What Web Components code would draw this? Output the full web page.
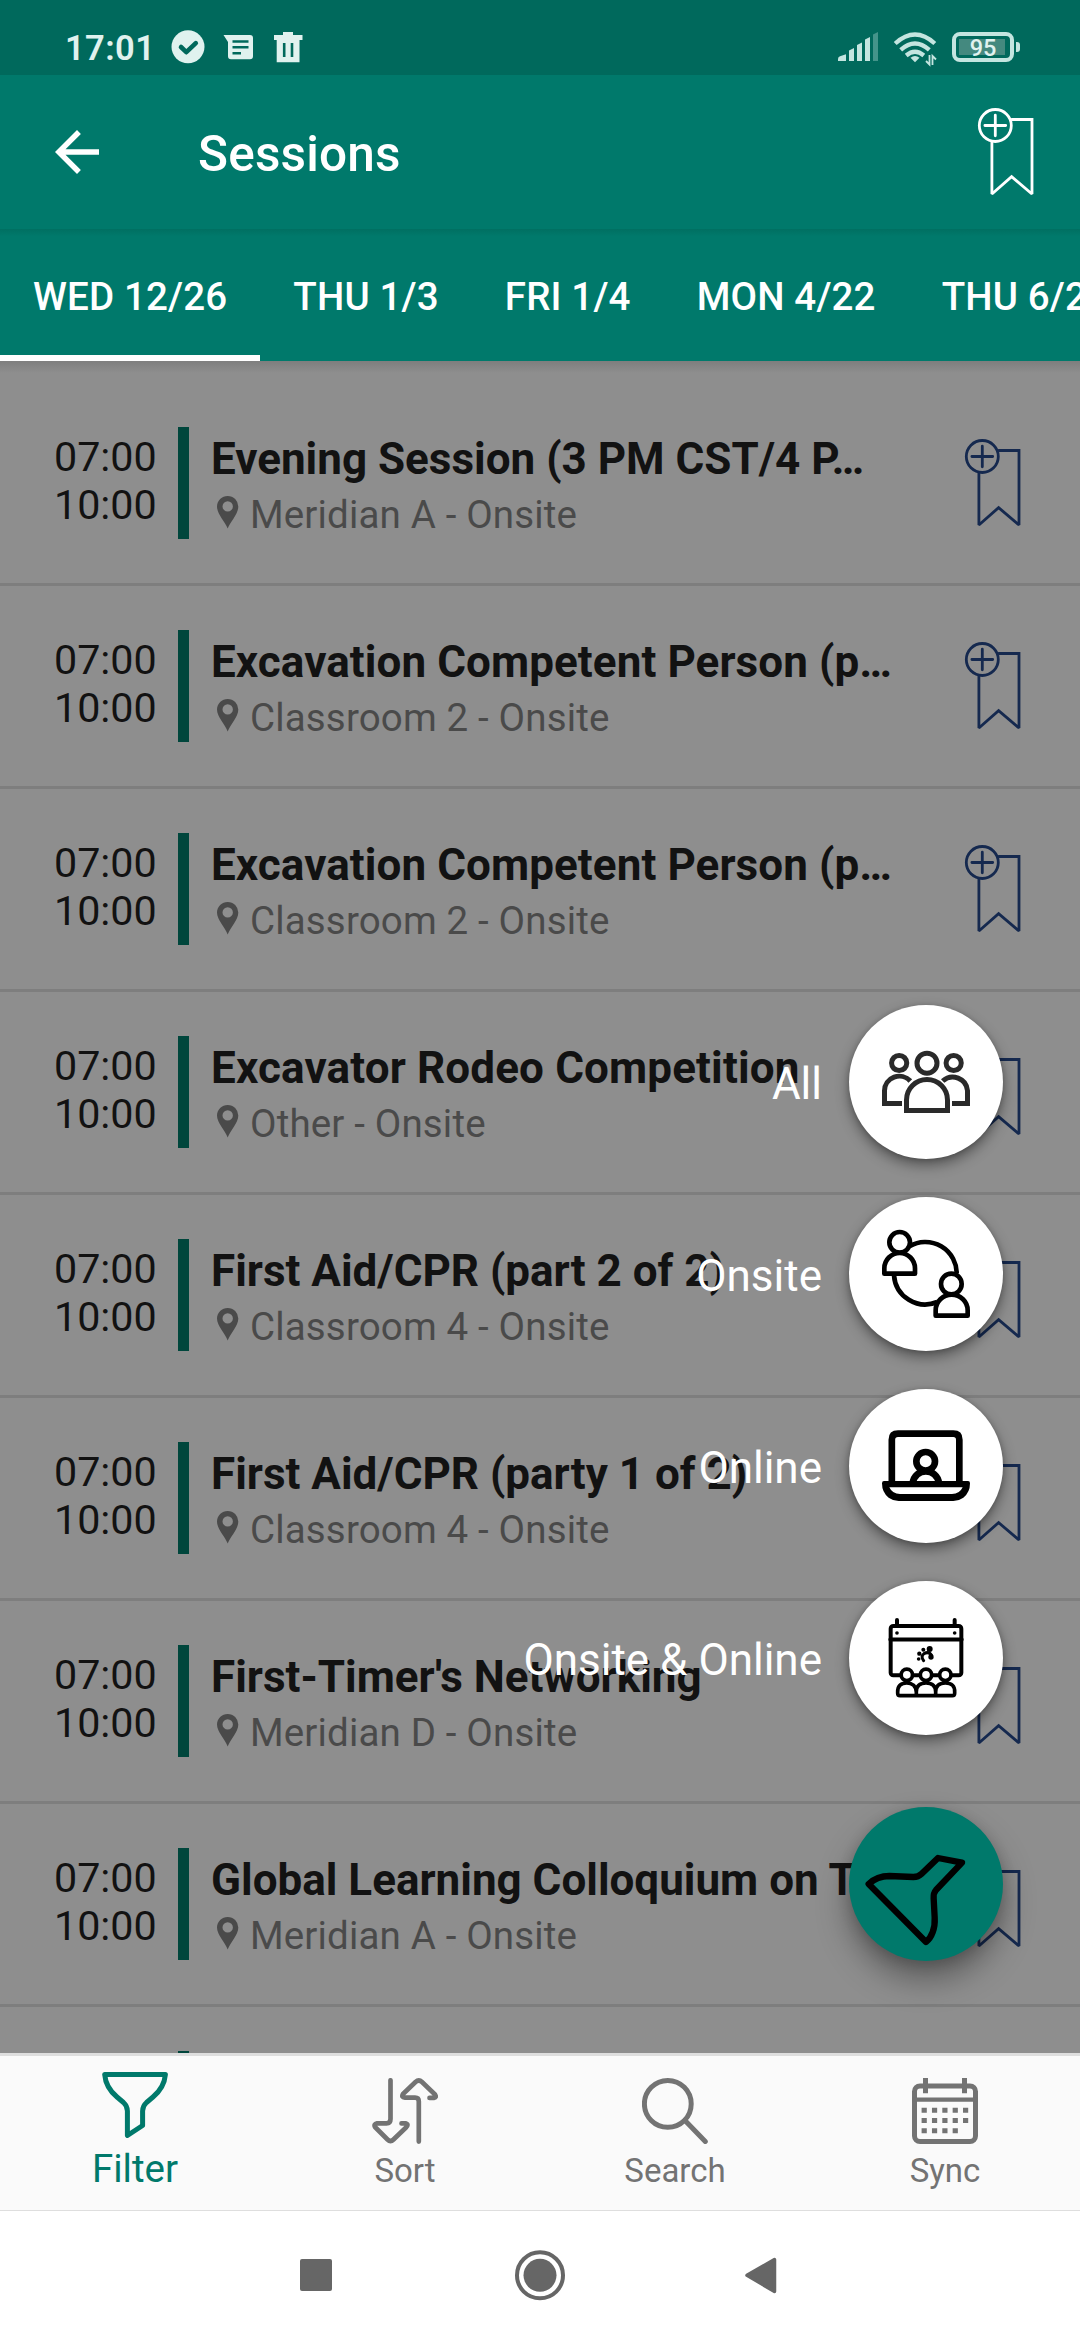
<!DOCTYPE html>
<html lang="en">
<head>
<meta charset="utf-8">
<title>Sessions</title>
<style>
html,body{margin:0;padding:0}
body{width:1080px;height:2340px;overflow:hidden;background:#fff;font-family:Roboto,"Noto Sans",sans-serif}
</style>
</head>
<body>
<sessions-screen></sessions-screen>
<script>
const define = (name, html, setup) => customElements.define(name, class extends HTMLElement {
  connectedCallback() {
    if (this.shadowRoot) return;
    const t = document.createElement('template');
    t.innerHTML = typeof html === 'function' ? html(this) : html;
    this.attachShadow({ mode: 'open' }).appendChild(t.content.cloneNode(true));
    if (setup) setup(this);
  }
});

/* Bookmark ribbon with a circled plus */
define('bookmark-icon', `
<style>:host{display:block;width:60px;height:90px}svg{display:block}</style>
<svg width="60" height="90" fill="none" stroke="currentColor" stroke-width="2.8" stroke-linejoin="round" stroke-linecap="round">
<circle cx="19.3" cy="18.5" r="16"/><path d="M8.9 18.5h20.8M19.3 8.2v20.6"/>
<path d="M36 12.5h20v74.500L35.6 69.6 15.9 87V35.5" stroke-linejoin="miter" stroke-miterlimit="2"/></svg>`);

define('status-bar', `
<style>
:host{display:flex;height:75px;background:#00695c;color:#e0f2ef;box-sizing:border-box;padding:0 60px 0 65px;align-items:flex-start}
.time{font-size:34.5px;font-weight:600;line-height:40px;margin-top:28px;width:106px;letter-spacing:.4px;white-space:nowrap}
svg{display:block}
.sp{flex:1}
.bat{margin-top:32px;display:flex;align-items:center;gap:2px}
.box{box-sizing:border-box;width:62px;height:30px;border:4px solid #c4e5e0;border-radius:8px;display:flex;align-items:center;justify-content:center;
background:linear-gradient(#44897f,#44897f) 3px 3px/46px 16px no-repeat;font-size:23.5px;font-weight:500;line-height:24px;padding-top:2px}
.cap{width:4px;height:10px;border-radius:0 3px 3px 0;background:#c4e5e0}
</style>
<div class="time">17:01</div>
<svg width="132" height="75" viewBox="171 0 132 75" fill="currentColor">
<circle cx="188" cy="46.8" r="16.5"/><path d="M181 47l5.3 5.2 9.5-9" fill="none" stroke="#00695c" stroke-width="4.6" stroke-linecap="round" stroke-linejoin="round"/>
<path d="M223.5 35H250q3 0 3 3v18.300q0 3-3 3h-19q-3 0-3-3V42z"/>
<path d="M232.500 41.500h16M232.500 47.300h16M232.500 53.200h8.500" stroke="#00695c" stroke-width="2.4"/>
<path d="M283 32h10v3h9.500v5H274v-5h9zM276.700 39H299.500V62.300H276.700z"/><path d="M284.200 43v14M292 43v14" stroke="#00695c" stroke-width="2.600"/>
</svg>
<div class="sp"></div>
<svg width="114" height="75" viewBox="838 0 114 75" fill="#c4e5e0">
<path d="M838 61v-2q0-2 2-2.800l6-2V61zM849 61V50.500l5-2.500V61zM857 61V45l5-2.500V61zM865 61V39.500l5-2.500V61z"/>
<path d="M873 61V34.500l5-2.500V61z" opacity=".35"/>
<g fill="none" stroke="#c4e5e0" stroke-width="4.300"><path d="M895.200 43.500Q915 25.500 934.800 43.500M900.700 49.800Q915 37 929.300 49.800M906.200 55.500Q915 48 923.800 55.500"/></g>
<path d="M915 62.300l-4.500-4.600q4.500-3.500 9 0z"/>
<path d="M929.500 55v9.500l-3.500-3.500M932.500 65v-9l3.500 3.500" fill="none" stroke="#c4e5e0" stroke-width="1.800"/>
</svg>
<div class="bat"><div class="box">95</div><div class="cap"></div></div>`);

define('app-bar', `
<style>
:host{display:flex;height:154px;background:#00796b;color:#fff;align-items:center;box-sizing:border-box;padding:0 44px}
svg{display:block;width:66px;height:66px}
h1{margin:4px 0 0 88px;font-size:49.5px;font-weight:500;line-height:60px;flex:1;letter-spacing:.2px}
</style>
<svg viewBox="0 0 24 24" fill="currentColor"><path d="M20 11H7.830l5.590-5.590L12 4l-8 8 8 8 1.410-1.410L7.830 13H20v-2z"/></svg>
<h1><slot></slot></h1><bookmark-icon></bookmark-icon>`);

define('day-tab', `
<style>
:host{display:block;flex:none;box-sizing:border-box;height:132px;padding:45px 33px 0;font-size:38.5px;font-weight:500;line-height:46px;letter-spacing:.16px;white-space:nowrap}
:host([selected]){border-bottom:6px solid #fff}
</style><slot></slot>`);

define('day-tabs', `
<style>:host{display:flex;height:132px;background:linear-gradient(#006f61,#00796b 7px);color:#fff;overflow:hidden}</style><slot></slot>`);

define('session-row', el => `
<style>
:host{display:flex;align-items:flex-start;box-sizing:border-box;height:203px;padding-left:54px;border-bottom:3px solid #7e7e7e;color:#121212}
.times{width:124px;margin-top:50px;font-size:41.25px;line-height:48px}
.bar{width:11px;height:112px;margin-top:44px;background:#00463c}
.body{margin:50px 0 0 22px;width:752px;white-space:nowrap}
.title{font-size:44px;font-weight:700;line-height:52px;letter-spacing:${el.getAttribute('tracking') || 0}px}
.place{display:flex;align-items:flex-start;margin-top:7px;font-size:38.500px;line-height:46px;letter-spacing:.16px;color:#4a4a4a}
svg{display:block;margin:4px 11px 0 6px}
bookmark-icon{margin-top:55px;color:#15294f}
</style>
<div class="times"><div>07:00</div><div>10:00</div></div>
<div class="bar"></div>
<div class="body"><div class="title"><slot></slot></div>
<div class="place"><svg width="22" height="33" fill="currentColor" fill-rule="evenodd"><path d="M10.700 0A10.600 10.600 0 0 1 21.300 10.600C21.300 18 13.500 25.500 10.700 32.500 8 25.500 0 18 0 10.600A10.700 10.600 0 0 1 10.700 0zm0 5.200a5.200 5.200 0 1 0 0 10.400 5.200 5.200 0 0 0 0-10.400z"/></svg><span>${el.getAttribute('place') || ''}</span></div></div>
<bookmark-icon></bookmark-icon>`);

define('session-list', `
<style>:host{display:block;height:1692px;box-sizing:border-box;padding-top:22px;overflow:hidden;background:linear-gradient(#7e7e7e,#8e8e8e 12px)}</style><slot></slot>`);

const ICONS = {
all: ['327 75 462 462', `<g fill="none" stroke="#2a2a2a" stroke-width="15"><circle cx="477.500" cy="249" r="22.800"/><circle cx="641" cy="249" r="22.800"/><circle cx="561" cy="249.500" r="30"/>
<path d="M511 303A44.500 44 0 0 0 433.500 332V370.500H486M608 303A44.500 44 0 0 1 682.500 332V370.500H636"/><path d="M499.500 391.500V360A61.500 61.500 0 0 1 622.500 360V391.500Z"/></g>`],
onsite: ['327 651 462 462', `<g fill="none" stroke="#000" stroke-width="14" stroke-linejoin="round"><path d="M510 798A94 94 0 0 1 650 880M462 886A94 94 0 0 0 592 966"/>
<circle cx="479" cy="787" r="31"/><path d="M433 881V865A46 46 0 0 1 525 865V881Z"/>
<circle cx="634" cy="912" r="31"/><path d="M587 1007V991A48 47 0 0 1 683 991V1007Z"/></g>`],
online: ['327 57 462 462', `<g fill="none" stroke="#000" stroke-width="20"><path d="M455.500 338V209Q455.500 191 474 191H640Q658 191 658 209V338"/><circle cx="557" cy="274" r="28"/><path d="M518 340C524 292 591 292 597 340"/></g>
<path fill-rule="evenodd" d="M432 333H684Q690 333 690 340 690 368 670 383 656 393 640 393H476Q460 393 446 383 426 368 426 340 426 333 432 333ZM448 352Q457 372 480 372H636Q659 372 668 352Z"/>`],
both: ['327 633 462 462', `<g fill="none" stroke="#000" stroke-width="12" stroke-linecap="round"><rect x="452" y="768" width="212" height="148" rx="8"/><path d="M451 808.500H665M471 750V766M644 750V766"/></g>
<circle cx="471" cy="789" r="5.500"/><circle cx="644" cy="789" r="5.500"/>
<path d="M551 872Q541 860 552 851 566 843 575 856" fill="none" stroke="#000" stroke-width="9" stroke-linecap="round"/><circle cx="573" cy="861" r="8"/><circle cx="569" cy="837" r="9"/><circle cx="550" cy="839" r="6"/><circle cx="538" cy="851" r="6.500"/><circle cx="536" cy="867" r="5.500"/>
<g fill="#fff" stroke="#000" stroke-width="11" stroke-linejoin="round"><path d="M473 966Q473 939 500 939T529 966V977H480Q473 977 473 970ZM529 966Q529 939 558 939T587 966V977H529ZM587 966Q587 939 616 939T644 966V970Q644 977 637 977H587Z"/>
<circle cx="500.500" cy="914.500" r="17"/><circle cx="558" cy="914.500" r="17"/><circle cx="616" cy="914.500" r="17"/></g>`],
funnel: ['327 80 462 462', `<path fill="none" stroke="#000" stroke-width="19" stroke-linejoin="round" d="M386 311C402 296 422 287 448 287L520 290Q535 290 545 280L594 233 666 247 588 329Q580 338 581 354L584 412C586 444 575 472 558 485Z"/>`]
};

define('dial-action', el => {
  const [vb, art] = ICONS[el.getAttribute('icon')];
  return `
<style>
:host{display:flex;align-items:center;justify-content:flex-end;height:154px}
.label{font-size:44px;line-height:52px;color:#fff;margin:4px 27px 0 0;white-space:nowrap}
.fab{width:154px;height:154px;border-radius:50%;background:#fff;box-shadow:0 6px 14px rgba(0,0,0,.42),0 1px 5px rgba(0,0,0,.18)}
:host([main]) .fab{background:#00796b;box-shadow:0 18px 32px rgba(0,0,0,.36),0 3px 14px rgba(0,0,0,.16)}
svg{display:block;width:154px;height:154px}
</style>
<div class="label"><slot></slot></div><div class="fab"><svg viewBox="${vb}">${art}</svg></div>`;
});

define('speed-dial', `
<style>:host{position:absolute;right:77px;top:1005px;display:flex;flex-direction:column;gap:38px}
::slotted([main]){margin-top:34px}</style><slot></slot>`);

const NAV = {
filter: '<path d="M2.700 2.500H63.400C62.500 13 57 20 51 25L44.500 30.500Q40.600 34 40.600 39V53.500L25.400 63.500V39Q25.400 34 21.500 30.500L15 25C9 20 3.500 13 2.700 2.500Z"/>',
sort: '<g stroke-width="4.700"><path d="M18.500 2.300V41Q18.500 45.300 14.500 45.300H5Q1.500 46 3 49L15.500 61.500Q18.500 64.500 21.500 61.500L34 49.500Q37 46.500 34 45.400H29.500M46.800 63.600V23.500Q46.800 19.700 43 19.700H33Q29 19.500 31 16L43.500 4Q46.800 1 50 4L63 16.500Q65 19.500 62 19.900H57.500"/></g>',
search: '<circle cx="25.800" cy="25.900" r="23.400"/><path d="M43 42.500L63.300 63.500"/>',
sync: '<rect x="2.500" y="8" width="61" height="55.500" rx="5.500"/><path d="M2.500 21.700H63.500" stroke-width="4.300"/><path stroke-linecap="butt" d="M13.500 0V15.300M52.500 0V15.300"/><g stroke-linecap="butt" stroke-dasharray="5.200 5.150"><path d="M9.600 32.200H56.500M9.600 42.500H56.500M9.600 52.800H46.500"/></g>'
};

define('nav-item', el => `
<style>
:host{flex:1;display:flex;flex-direction:column;align-items:center;padding-top:22px;color:#737373;font-size:33px;line-height:38px}
:host([active]){padding-top:16px;color:#00796b;font-size:38.500px;line-height:46px}
svg{display:block;margin-bottom:8px}
</style>
<svg width="66" height="66" fill="none" stroke="currentColor" stroke-width="5" stroke-linecap="round" stroke-linejoin="round">${NAV[el.getAttribute('icon')]}</svg>
<div><slot></slot></div>`);

define('bottom-nav', `
<style>:host{display:flex;height:158px;box-sizing:border-box;border-top:3px solid #dedede;border-bottom:1px solid #dedede;background:#fafafa}</style><slot></slot>`);

define('system-nav', `
<style>:host{display:flex;height:129px;background:#fff;justify-content:center;align-items:center}svg{display:block}</style>
<svg width="480" height="60" viewBox="300 2246 480 60" fill="#666"><rect x="300" y="2259" width="32" height="32" rx="2"/>
<circle cx="540" cy="2275.300" r="16.500"/><circle cx="540" cy="2275.300" r="23" fill="none" stroke="#666" stroke-width="4"/>
<path d="M747 2275.300L774.500 2259.500V2291.500Z" stroke="#666" stroke-width="3.500" stroke-linejoin="round"/></svg>`);

define('sessions-screen', `
<style>:host{display:flex;flex-direction:column;position:relative;width:1080px;height:2340px;overflow:hidden}
status-bar,app-bar,day-tabs,session-list,bottom-nav,system-nav{flex:none}</style>
<status-bar></status-bar>
<app-bar>Sessions</app-bar>
<day-tabs><day-tab selected>WED 12/26</day-tab><day-tab>THU 1/3</day-tab><day-tab>FRI 1/4</day-tab><day-tab>MON 4/22</day-tab><day-tab>THU 6/20</day-tab></day-tabs>
<session-list>
<session-row place="Meridian A - Onsite">Evening Session (3 PM CST/4 P…</session-row>
<session-row tracking=".08" place="Classroom 2 - Onsite">Excavation Competent Person (p…</session-row>
<session-row tracking=".08" place="Classroom 2 - Onsite">Excavation Competent Person (p…</session-row>
<session-row tracking=".14" place="Other - Onsite">Excavator Rodeo Competition</session-row>
<session-row place="Classroom 4 - Onsite">First Aid/CPR (part 2 of 2)</session-row>
<session-row place="Classroom 4 - Onsite">First Aid/CPR (party 1 of 2)</session-row>
<session-row place="Meridian D - Onsite">First-Timer's Networking</session-row>
<session-row place="Meridian A - Onsite">Global Learning Colloquium on T…</session-row>
<session-row></session-row>
</session-list>
<bottom-nav><nav-item icon="filter" active>Filter</nav-item><nav-item icon="sort">Sort</nav-item><nav-item icon="search">Search</nav-item><nav-item icon="sync">Sync</nav-item></bottom-nav>
<system-nav></system-nav>
<speed-dial>
<dial-action icon="all">All</dial-action>
<dial-action icon="onsite">Onsite</dial-action>
<dial-action icon="online">Online</dial-action>
<dial-action icon="both">Onsite &amp; Online</dial-action>
<dial-action icon="funnel" main></dial-action>
</speed-dial>`);
</script>
</body>
</html>
